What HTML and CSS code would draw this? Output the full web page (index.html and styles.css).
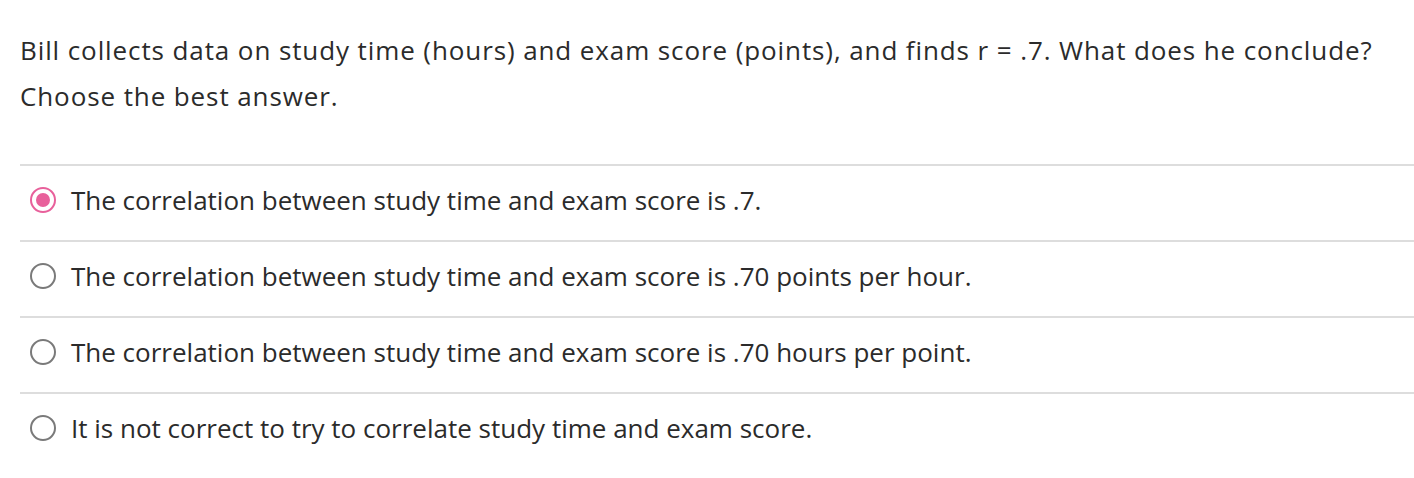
FILE: index.html
```html
<!DOCTYPE html>
<html>
<head>
<meta charset="utf-8">
<link rel="stylesheet" href="styles.css">
</head>
<body>
<div class="question">
  <p class="prompt">Bill collects data on study time (hours) and exam score (points), and finds r = .7. What does he conclude?</p>
  <p class="prompt">Choose the best answer.</p>
  <ul class="choices">
    <li class="choice"><span class="radio selected"></span><span class="label">The correlation between study time and exam score is .7.</span></li>
    <li class="choice"><span class="radio"></span><span class="label">The correlation between study time and exam score is .70 points per hour.</span></li>
    <li class="choice"><span class="radio"></span><span class="label">The correlation between study time and exam score is .70 hours per point.</span></li>
    <li class="choice"><span class="radio"></span><span class="label">It is not correct to try to correlate study time and exam score.</span></li>
  </ul>
</div>
</body>
</html>
```
FILE: styles.css
```css
html, body {
  margin: 0;
  padding: 0;
  background: #fff;
}
body {
  font-family: "Open Sans", "Liberation Sans", sans-serif;
  color: #2b2b2b;
  font-size: 26px;
}
.question {
  padding: 27px 0 0 20px;
}
.prompt {
  margin: 0;
  line-height: 46px;
  letter-spacing: 0.9px;
}
.choices {
  list-style: none;
  margin: 45px 0 0 0;
  padding: 0;
}
.choice {
  box-sizing: border-box;
  display: flex;
  align-items: center;
  gap: 15px;
  height: 76px;
  border-top: 2px solid #dddddd;
  padding: 0 0 6px 10px;
}
.radio {
  box-sizing: border-box;
  width: 26px;
  height: 26px;
  border-radius: 50%;
  border: 2px solid #7a7a7a;
  flex: none;
  position: relative;
}
.radio.selected {
  border: 2px solid #e8609b;
}
.radio.selected::after {
  content: "";
  position: absolute;
  inset: 4px;
  border-radius: 50%;
  background: #e8609b;
}
.label {
  line-height: 1;
}
```
